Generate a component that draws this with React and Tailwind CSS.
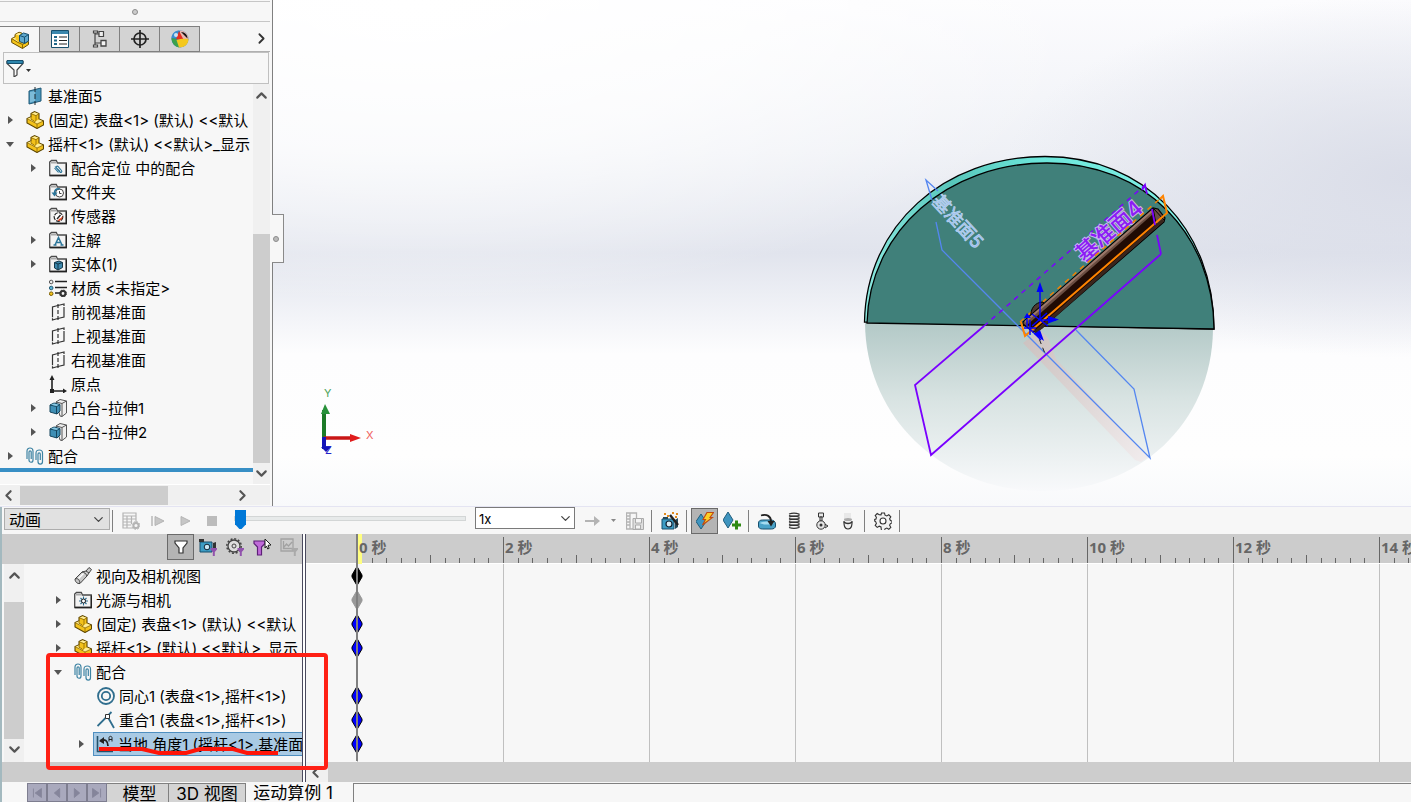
import React, { useState } from 'react';
import { FiChevronDown, FiChevronLeft, FiChevronRight, FiChevronUp } from 'react-icons/fi';

const Svg = ({ size = 18, box = 18, children }) => (
  <svg width={size} height={size} viewBox={`0 0 ${box} ${box}`} fill="none" className="shrink-0">
    {children}
  </svg>
);

/* ---------- tree icons ---------- */

const PartIcon = () => (
  <Svg>
    <path d="M5 2.500 8.500.7l4.500 1.800V8l4.500 2v4l-6.500 3.500L1 12V7.500l4-1.800z" fill="#f3c21b" stroke="#5d4600" strokeWidth="1.100" />
    <path d="M5.500 2.700 8.500 1.200l4 1.500-2.500 1.600zM1.500 7.700 5 6.200v2.300l3 1.500-1.500 1zM10.500 9.500l2.500-1 4 1.700-6 3-3-1.700z" fill="#ffec94" />
    <path d="M5 2.700l5 2v4.800L8 11.300 1.500 7.800M10 4.700l2.700-1.900M8 11.300l3 1.700v4M11 13l6-2.800M5 6v2.300l3 1.500" stroke="#8a6700" strokeWidth=".8" />
  </Svg>
);

const AssemblyIcon = () => (
  <Svg>
    <path d="M4 3.500 8 1.200l3 1v6l6.500 2.300v3L11.500 17.500.700 11.500v-4L4 6z" fill="#f6c61c" stroke="#6b4f00" />
    <path d="M4.500 3.500 8 1.800l2.500 1L8 4.500zM1.500 7.500 4.500 6.500v2l3 2-1 .8z" fill="#ffec94" />
    <path d="M1 7.800l6 3.700 4.500 2v4M11.500 13.500l5.500-3" stroke="#8a6700" />
    <path d="M8.500 4.500l4-2.500 5 1.500V10l-4 2.500-5-2z" fill="#5fa9cd" stroke="#174f6d" />
    <path d="M8.500 4.500 13.500 6.200l4-2.700M13.500 6.200v6" stroke="#174f6d" />
  </Svg>
);

const PlaneSolidIcon = () => (
  <Svg>
    <path d="M3 4l12-3v13L3 17z" fill="#4b97bd" stroke="#1f5876" />
    <path d="M4 5l5-1v10l-5 1.500z" fill="#7cbbd8" />
    <path d="M9 0v18" stroke="#1c2a33" strokeDasharray="5 2" />
  </Svg>
);

const PlaneIcon = () => (
  <Svg>
    <path d="M7 3 3.500 4v13L7 16M11 15l4-1V1l-4 1M7 3l4-1M7 16l4-1" stroke="#333" strokeWidth="1.200" strokeDasharray="14 1" />
    <path d="M9 1v17" stroke="#333" strokeWidth="1.200" strokeDasharray="4 2" />
  </Svg>
);

const Folder = ({ children }) => (
  <Svg>
    <path d="M.7 16.500V3L2.500 1.500h4.800L8.500 4h8.800v12.500z" fill="#f3f3f3" stroke="#4b4b4b" strokeWidth="1.300" />
    <path d="M2 3h5l1 1.500H2z" fill="#a9a9a9" />
    <path d="M17.300 4.500v12H1" stroke="#222" strokeWidth="1.300" />
    {children}
  </Svg>
);

const MateFolderIcon = () => (
  <Folder>
    <path d="M6 7.500l5 5.500c1 1 2.500-.4 1.500-1.500L9 7.500C8 6.500 6.500 7.500 7.500 9l3.500 3.500M5.500 9l4 4.500" stroke="#2b7599" strokeWidth="1.100" />
  </Folder>
);
const HistoryFolderIcon = () => (
  <Folder>
    <circle cx="10.500" cy="10" r="4" stroke="#444" fill="#fff" />
    <path d="M10.500 8v2.500h2" stroke="#444" />
    <path d="M11 6C7 5 5 7.500 5.500 11" stroke="#2b7599" strokeWidth="1.600" />
    <path d="M2.500 9.500h6l-3 4z" fill="#2b7599" />
  </Folder>
);
const SensorFolderIcon = () => (
  <Folder>
    <circle cx="9.500" cy="10" r="4.300" stroke="#222" strokeWidth="1.200" strokeDasharray="4 1" fill="#fff" />
    <path d="M13.500 9a4.300 4.300 0 0 1-5 5l1.500-2 2-1z" fill="#e3421d" />
    <path d="M8 12l3.500-4" stroke="#222" strokeWidth="1.300" />
  </Folder>
);
const NoteFolderIcon = () => (
  <Folder>
    <path d="M6 14 9.500 6.500 13 14M7.500 11.500h4M4.500 14h3M11.500 14h3" stroke="#2b7599" strokeWidth="1.500" />
  </Folder>
);
const BodyFolderIcon = () => (
  <Folder>
    <path d="M5.500 7.500 10 6l3.500 1.500v5L9 15l-3.500-2z" fill="#3c88ad" stroke="#15384a" />
    <path d="M5.500 7.500 9 9l4.500-1.500M9 9v6" stroke="#15384a" />
  </Folder>
);
const LightFolderIcon = () => (
  <Folder>
    <path d="M9.500 5.500v9M5 10h9M6.500 7l6 6M12.500 7l-6 6" stroke="#2b6f92" strokeWidth="1.100" />
    <circle cx="9.500" cy="10" r="2" fill="#fff" stroke="#222" />
  </Folder>
);

const MaterialIcon = () => (
  <Svg>
    <path d="M6 2.500h12M6 8.500h12M6 14h5" stroke="#222" strokeWidth="1.600" />
    <circle cx="2.200" cy="3" r="1.800" fill="#eee" stroke="#555" />
    <circle cx="2.200" cy="9" r="1.800" fill="#58b3d8" stroke="#245c75" />
    <circle cx="2.200" cy="14.700" r="1.800" fill="#f5c41a" stroke="#7a5d00" />
    <circle cx="14" cy="14.500" r="2.400" stroke="#333" strokeWidth="2" />
    <circle cx="14" cy="14.500" r="3.500" stroke="#333" strokeDasharray="1.500 1.250" />
  </Svg>
);

const OriginIcon = () => (
  <Svg>
    <path d="M3 3v13h12" stroke="#222" strokeWidth="1.600" />
    <path d="M.5 5 3 0l2.500 5zM14 13.500l4 2.500-4 2.500zM1 14h4v4H1z" fill="#222" />
  </Svg>
);

const ExtrudeIcon = () => (
  <Svg>
    <path d="M7 3l4-2.500L17.500 2v12L13 17.500l-2-.5z" fill="#efefef" stroke="#555" />
    <path d="M13 4.500v13M7 3l6 1.500L17.500 2" stroke="#555" />
    <path d="M1 6l4-2 6 1.500V12l-3 3-7-2z" fill="#3f8fb5" stroke="#15455d" />
    <path d="M1 6l6.500 1.500V15M7.500 7.500 11 5.500" stroke="#15455d" />
    <path d="M2 5.800 5 4.600l4.800 1.200-2.300 1.200z" fill="#8ac8e2" />
  </Svg>
);

const MatesIcon = () => (
  <Svg>
    <path d="M1 12V4c0-4 6-4 6 0v9c0 3-4 3-4 0V5c0-1.500 2.200-1.500 2.200 0v7" stroke="#3d83a3" strokeWidth="1.200" />
    <path d="M10 13V6c0-4 6.500-4 6.500 0v8.500c0 3.500-4.500 3.500-4.500 0V7c0-1.500 2.300-1.500 2.300 0v6" stroke="#3d83a3" strokeWidth="1.200" />
  </Svg>
);

const ConcentricIcon = () => (
  <Svg>
    <circle cx="9" cy="9" r="8" stroke="#2f6e8e" strokeWidth="1.800" />
    <circle cx="9" cy="9" r="4.200" stroke="#2f6e8e" strokeWidth="1.800" />
  </Svg>
);
const CoincidentIcon = () => (
  <Svg>
    <path d="M.5 15 14.500 1M10.500 5.500 17 17" stroke="#2f6e8e" strokeWidth="1.800" />
    <path d="M8.500 3.500h4v4h-4z" fill="#fff" stroke="#333" />
  </Svg>
);
const AngleIcon = () => (
  <Svg>
    <path d="M1.500 1v15.500H17" stroke="#24516a" strokeWidth="1.600" />
    <path d="M4.500 5.500C9 3.500 12 6 12 11" stroke="#222" strokeWidth="1.800" />
    <path d="M3 6l5-4v7z" fill="#222" />
    <path d="M13 6.500V2.800c0-2 3-2 3 0v3.700M13 4.500h3" stroke="#222" />
  </Svg>
);
const CameraViewIcon = () => (
  <Svg>
    <path d="M1 12l7-7 4-1 3-3.500 2.500 2L15 6l-2 3-7 7.500c-3 .5-5-2-5-4.500z" fill="#c9c9c9" stroke="#444" />
    <path d="M1.500 12c2-1 4 .5 4.500 4M8 5c2 0 4 1.500 5 4M12 4l3 2" stroke="#444" />
    <path d="M4 11l5-5 1 1-5 5z" fill="#fff" />
  </Svg>
);

/* ---------- property manager tabs ---------- */

const ListTabIcon = () => (
  <Svg>
    <path d="M.5.500h17v17H.5z" fill="#fff" stroke="#174f6d" />
    <path d="M1 1h16v3H1z" fill="#3b88ae" />
    <path d="M3 7h3M3 10.500h3M3 14h3" stroke="#1f6789" strokeWidth="2" />
    <path d="M8 7h8M8 10.500h8M8 14h8" stroke="#222" />
  </Svg>
);
const ConfigTabIcon = () => (
  <Svg>
    <path d="M4 1v16M4 4h4M4 13h6" stroke="#444" strokeWidth="1.200" />
    <path d="M2.500 1h4v2h-4zM2.500 15h4v2h-4zM8 1.500h4.500v5H8z" fill="#eee" stroke="#444" strokeWidth="1.200" />
    <path d="M10 10.500h5v5.500h-5z" fill="#f4f4f4" stroke="#444" strokeWidth="1.300" />
  </Svg>
);
const TargetTabIcon = () => (
  <Svg>
    <circle cx="9" cy="9" r="6" stroke="#222" strokeWidth="1.700" />
    <path d="M9 0v18M0 9h18" stroke="#222" strokeWidth="1.700" />
  </Svg>
);
const AppearanceTabIcon = () => (
  <Svg>
    <circle cx="9" cy="9" r="8.500" fill="#2d7ec4" />
    <path d="M9 9V.5A8.500 8.500 0 0 1 17.500 9z" fill="#e8b6ae" />
    <path d="M.5 8C.5 4 4 .500 8 .5L6 8z" fill="#3a8fd0" />
    <path d="M5 9.500 8 1l4.500 8.500z" fill="#e52f1f" />
    <path d="M.5 8l5 1L8 17.400C4 17 .5 13 .5 8z" fill="#3ca24c" />
    <path d="M5.500 10c4-1.500 8-1.500 12-1 0 5-4 8.500-9.500 8.500z" fill="#f4c81d" />
    <path d="M10 2c4 0 6.500 3 6.500 6.500z" fill="#111" />
    <circle cx="5" cy="5" r="2" fill="#fff" opacity=".75" />
  </Svg>
);
const FilterIcon = () => (
  <Svg>
    <path d="M1 2.500h16v2L11 11v5l-3 2v-7L1 4.500z" fill="#fafafa" stroke="#444" strokeWidth="1.200" />
    <path d="M1 1.500h16v3H1z" fill="#2d86ad" stroke="#174f6d" />
  </Svg>
);

/* ---------- motion toolbar icons ---------- */

const CalcIcon = () => (
  <Svg>
    <path d="M1 1h13v15H1zM1 4h13M1 7h13M1 10h9M1 13h8M5 4v12M9.500 4v8" stroke="#b4b4b4" strokeWidth="1.200" />
    <circle cx="14" cy="13.500" r="2.600" fill="#f7f7f7" stroke="#b4b4b4" strokeWidth="2" />
    <circle cx="14" cy="13.500" r="3.900" stroke="#b4b4b4" strokeDasharray="1.600 1.460" />
  </Svg>
);
const PlayStartIcon = () => (
  <Svg>
    <path d="M3 4v10" stroke="#b9b9b9" strokeWidth="1.500" />
    <path d="M6 4.500l9 4.500-9 4.500z" fill="#c6c6c6" stroke="#b4b4b4" />
  </Svg>
);
const PlayIcon = () => (
  <Svg><path d="M5 4.500l9 4.500-9 4.500z" fill="#c6c6c6" stroke="#b4b4b4" /></Svg>
);
const StopIcon = () => (
  <Svg><path d="M4 4h10v10H4z" fill="#bcbcbc" /></Svg>
);
const ArrowIcon = () => (
  <Svg><path d="M1 8h9V4l6 5-6 5v-4H1z" fill="#b4b4b4" /></Svg>
);
const SaveFilmIcon = () => (
  <Svg>
    <path d="M.5 1h10v16H.5zM4 1v16M.5 4H4M.5 7H4M.5 10H4M.5 13H4" stroke="#b4b4b4" strokeWidth="1.300" />
    <path d="M7 6.500h10.500v11H7z" fill="#dedede" stroke="#aaa" />
    <path d="M9.500 6.500h6V11h-6zM9.500 13h5v4h-5z" fill="#f4f4f4" stroke="#aaa" />
  </Svg>
);
const WizardIcon = () => (
  <Svg>
    <path d="M1 7h12v10H1z" fill="#3c9cc4" stroke="#174f6d" />
    <path d="M2 5h5v2H2zM14 8l3-2v9l-3 2z" fill="#244a5c" />
    <circle cx="8" cy="12" r="3" fill="#d5edf7" stroke="#123" strokeWidth="1.200" />
    <path d="M9 3l8 10" stroke="#222" strokeWidth="2.400" />
    <path d="M3 2h2M6 4h2M11 1h2M15 2h2M14 5h2" stroke="#e08a1e" strokeWidth="2" />
  </Svg>
);
const AutoKeyIcon = () => (
  <Svg>
    <path d="M5 2l5 7.500L5 17 0 9.500z" fill="#3f95bf" stroke="#205e7d" />
    <path d="M11 .5h6.500L14 5.500h2.500L6.500 13 9.500 7.500H7z" fill="#fbcf24" stroke="#c04a11" strokeWidth="1.100" />
  </Svg>
);
const AddKeyIcon = () => (
  <Svg>
    <path d="M5 0l5 8-5 8-5-8z" fill="#3f95bf" stroke="#205e7d" />
    <path d="M13.500 8.500v9M9 13h9" stroke="#2f8a12" strokeWidth="3" />
  </Svg>
);
const MotorIcon = () => (
  <Svg>
    <path d="M.5 11c0-2 1.500-3 4-3h8c3 0 5 1.500 5 4v2c0 2-2 3-4 3h-9c-2.500 0-4-1-4-3z" fill="#4aa3c9" stroke="#174f6d" />
    <path d="M2 11c2-2 12-2 14 0-2 2-12 2-14 0z" fill="#a5dcf0" />
    <path d="M3 3.500c6-2 10 1 10 6" stroke="#222" strokeWidth="1.800" />
    <path d="M9.500 9h7L13 14.500z" fill="#222" />
  </Svg>
);
const SpringIcon = () => (
  <Svg>
    {[2, 5, 8, 11, 14].map((y) => (
      <path key={y} d={`M4 ${y}c3-1 7-1 10 0v1.500c-3 1-7 1-10 0`} stroke="#333" strokeWidth="1.100" />
    ))}
  </Svg>
);
const ContactIcon = () => (
  <Svg>
    <path d="M6.500 1h5v4h-5z" fill="#e8e8e8" stroke="#333" />
    <path d="M8 5h2v4H8zM11 11l5 3-3 2" fill="#ddd" stroke="#333" />
    <circle cx="9" cy="13" r="4.200" fill="#e4e4e4" stroke="#333" />
    <circle cx="9" cy="13" r="1.500" fill="#333" />
  </Svg>
);
const GravityIcon = () => (
  <Svg>
    <path d="M5 1h7v8H5z" fill="#ddd" opacity=".6" />
    <path d="M5 9c0 2-.5 8 4 8s4-6 4-8" fill="#eee" stroke="#333" strokeWidth="1.200" />
    <path d="M5 10c2 2 6 2 8 0" stroke="#333" strokeWidth="1.500" />
    <ellipse cx="9" cy="7.500" rx="4" ry="1.500" fill="#aaa" />
  </Svg>
);
const GearIcon = () => (
  <Svg>
    <path d="M7.500 1h3l.5 2.200 1.800.8 2-1.200 2 2-1.200 2 .8 1.700 1.600.5v2l-1.600.6-.8 1.700 1.200 2-2 2-2-1.200-1.800.7-.5 2.200h-3L7 15l-1.800-.8-2 1.200-2-2 1.200-2-.8-1.800-.9-.5V7.500L2 7l.4-1.700-1.200-1.800 2-2 2 1.200L7 2.900z" fill="#f2f2f2" stroke="#333" strokeWidth="1.100" />
    <circle cx="9" cy="9" r="3" fill="#fff" stroke="#333" strokeWidth="1.100" />
  </Svg>
);

const SmallFunnel = ({ color = '#9153ad' }) => (
  <path d="M11.500 10h6.500v1.500l-2.200 2.500v4h-2v-4l-2.300-2.500z" fill={color} />
);
const FunnelIcon = () => (
  <Svg>
    <path d="M3 3h12v2l-4 5v5H7v-5L3 5z" fill="#fff" stroke="#333" strokeWidth="1.200" />
  </Svg>
);
const FilterAnimIcon = () => (
  <Svg>
    <path d="M1 4h12v10H1z" fill="#3c9cc4" stroke="#174f6d" />
    <path d="M0 1h5v3H0zM14 5l3-1v6l-3 1z" fill="#333" />
    <circle cx="8" cy="9" r="2.800" fill="#c7e7f4" stroke="#123" />
    <SmallFunnel />
  </Svg>
);
const FilterDriveIcon = () => (
  <Svg>
    <circle cx="8" cy="8" r="6" fill="#ddd" stroke="#444" strokeWidth="1.300" />
    <circle cx="8" cy="8" r="7.200" stroke="#444" strokeWidth="1.500" strokeDasharray="2 1.770" />
    <circle cx="8" cy="8" r="2" stroke="#444" />
    <SmallFunnel />
  </Svg>
);
const FilterSelectIcon = () => (
  <Svg>
    <path d="M1 3h11v2.500L8.500 9v8h-4V9L1 5.500z" fill="#c06bd9" stroke="#5d1f78" strokeWidth="1.200" />
    <path d="M12 1l6 6-3 .3 1.200 3-1.500.7-1.200-3-1.500 2z" fill="#fff" stroke="#222" />
  </Svg>
);
const FilterResultIcon = () => (
  <Svg>
    <path d="M1 1h12v12H1zM3.500 3v7.500H12M4 9l2.500-3 2 2L12 4" stroke="#a2a2a2" strokeWidth="1.300" />
    <SmallFunnel color="#aaa" />
  </Svg>
);

/* ---------- data ---------- */

const featureTree = [
  { label: '基准面5', icon: PlaneSolidIcon, level: 0 },
  { label: '(固定) 表盘<1> (默认) <<默认', icon: PartIcon, level: 0, arrow: 'closed' },
  { label: '摇杆<1> (默认) <<默认>_显示', icon: PartIcon, level: 0, arrow: 'open' },
  { label: '配合定位 中的配合', icon: MateFolderIcon, level: 1, arrow: 'closed' },
  { label: '文件夹', icon: HistoryFolderIcon, level: 1 },
  { label: '传感器', icon: SensorFolderIcon, level: 1 },
  { label: '注解', icon: NoteFolderIcon, level: 1, arrow: 'closed' },
  { label: '实体(1)', icon: BodyFolderIcon, level: 1, arrow: 'closed' },
  { label: '材质 <未指定>', icon: MaterialIcon, level: 1 },
  { label: '前视基准面', icon: PlaneIcon, level: 1 },
  { label: '上视基准面', icon: PlaneIcon, level: 1 },
  { label: '右视基准面', icon: PlaneIcon, level: 1 },
  { label: '原点', icon: OriginIcon, level: 1 },
  { label: '凸台-拉伸1', icon: ExtrudeIcon, level: 1, arrow: 'closed' },
  { label: '凸台-拉伸2', icon: ExtrudeIcon, level: 1, arrow: 'closed' },
  { label: '配合', icon: MatesIcon, level: 0, arrow: 'closed' },
];

const motionTree = [
  { label: '视向及相机视图', icon: CameraViewIcon, level: 0, keyColor: '#000' },
  { label: '光源与相机', icon: LightFolderIcon, level: 0, arrow: 'closed', keyColor: '#999' },
  { label: '(固定) 表盘<1> (默认) <<默认', icon: PartIcon, level: 0, arrow: 'closed', keyColor: '#00f' },
  { label: '摇杆<1> (默认) <<默认>_显示', icon: PartIcon, level: 0, arrow: 'closed', keyColor: '#00f' },
  { label: '配合', icon: MatesIcon, level: 0, arrow: 'open' },
  { label: '同心1 (表盘<1>,摇杆<1>)', icon: ConcentricIcon, level: 1, keyColor: '#00f' },
  { label: '重合1 (表盘<1>,摇杆<1>)', icon: CoincidentIcon, level: 1, keyColor: '#00f' },
  { label: '当地 角度1 (摇杆<1>,基准面', icon: AngleIcon, level: 1, arrow: 'closed', selected: true, keyColor: '#00f' },
];

const managerTabs = [AssemblyIcon, ListTabIcon, ConfigTabIcon, TargetTabIcon, AppearanceTabIcon];
const seconds = [0, 2, 4, 6, 8, 10, 12, 14];

/* ---------- small parts ---------- */

const TreeRow = ({ item }) => {
  const Icon = item.icon;
  return (
    <li className={`flex h-6 items-center ${item.level ? 'pl-[23px]' : ''}`}>
      <button aria-label={item.label} className="flex h-6 w-5 shrink-0 items-center justify-center">
        {item.arrow === 'closed' && (
          <svg width="5" height="8" viewBox="0 0 5 8"><path d="M0 0l5 4-5 4z" fill="#555" /></svg>
        )}
        {item.arrow === 'open' && (
          <svg width="8" height="5" viewBox="0 0 8 5"><path d="M0 0h8L4 5z" fill="#555" /></svg>
        )}
      </button>
      <div className={`flex items-center gap-1 border leading-[18px] whitespace-nowrap ${item.selected ? 'ml-[2px] h-6 flex-1 border-r-0 border-[#4f8fc0] bg-[#a9cae4] pl-[2px]' : 'shrink-0 border-transparent pl-[5px]'}`}>
        <Icon />
        <span className="pt-[2px]">{item.label}</span>
      </div>
    </li>
  );
};

const Separator = () => <span className="mr-1 ml-[3px] h-[22px] w-px shrink-0 bg-[#808080]" />;

const ToolButton = ({ icon: Icon, label, active }) => (
  <button
    aria-label={label}
    className={`flex h-[26px] w-[27px] shrink-0 items-center justify-center ${active ? 'border border-[#6a6a6a] bg-[#b4b4b4]' : ''}`}
  >
    <Icon />
  </button>
);

const KeyPoint = ({ color }) => (
  <svg width="12" height="20" viewBox="0 0 12 20">
    <path d="M6 .5l5 8.500v2L6 19.500 1 11V9z" fill={color} stroke={color === '#00f' ? '#000' : color} />
  </svg>
);

/* ---------- 3D view ---------- */

const Scene = () => (
  <svg viewBox="273 0 1138 506" preserveAspectRatio="xMidYMid slice" className="absolute inset-0 h-full w-full">
    <defs>
      <linearGradient id="sky" x1="0" y1="0" x2="0" y2="1">
        <stop offset="0" stopColor="#fcfcfe" />
        <stop offset=".3" stopColor="#eff1f6" />
        <stop offset=".5" stopColor="#e1e4ed" />
        <stop offset=".58" stopColor="#eceef4" />
        <stop offset=".7" stopColor="#fdfdfe" />
        <stop offset=".9" stopColor="#fefefe" />
        <stop offset="1" stopColor="#f8f9fb" />
      </linearGradient>
      <radialGradient id="glow" cx=".12" cy="0" r=".6">
        <stop offset="0" stopColor="#fff" />
        <stop offset=".5" stopColor="#fff" stopOpacity=".7" />
        <stop offset="1" stopColor="#fff" stopOpacity="0" />
      </radialGradient>
      <radialGradient id="shade" cx="1" cy=".35" r=".36">
        <stop offset="0" stopColor="#dadde8" />
        <stop offset="1" stopColor="#dadde8" stopOpacity="0" />
      </radialGradient>
      <linearGradient id="mirror" x1="0" y1="0" x2="0" y2="1">
        <stop offset="0" stopColor="#b3c9c7" />
        <stop offset=".45" stopColor="#d8e3e2" />
        <stop offset="1" stopColor="#f8f9fb" />
      </linearGradient>
      <linearGradient id="rodMirror" x1="0" y1="0" x2="1" y2="1">
        <stop offset="0" stopColor="#cbc1bf" />
        <stop offset="1" stopColor="#f1eced" />
      </linearGradient>
      <linearGradient id="rim" x1="0" y1="0" x2="1" y2="0">
        <stop offset="0" stopColor="#8be9e0" />
        <stop offset=".25" stopColor="#58c6ba" />
        <stop offset=".5" stopColor="#6ce6da" />
        <stop offset="1" stopColor="#86f3e9" />
      </linearGradient>
    </defs>
    <rect x="273" width="1138" height="506" fill="url(#sky)" />
    <rect x="273" width="1138" height="506" fill="url(#shade)" />
    <rect x="273" width="1138" height="506" fill="url(#glow)" />

    {/* dial and its floor reflection */}
    <path d="M865 323C866 420 945 491 1042 491S1212 424 1213 329z" fill="url(#mirror)" />
    <path d="M1023 343l17-13 8 8 8 21 92 98-7 5-6-2z" fill="url(#rodMirror)" />
    <path d="M864.500 322C866 225 945 156.500 1045 156.500S1214 230 1214 329z" fill="url(#rim)" stroke="#000" strokeWidth="1.300" />
    <path d="M867 323C869 231 948 163 1047 163S1213.500 235 1214 329z" fill="#40807a" stroke="#000" strokeWidth="1.300" />

    {/* plane 5 */}
    <path d="M932 200l-6-20 12 11M936 222l6 28 208 208-16-69-58-59" stroke="#5486f0" strokeWidth="1.300" fill="none" />
    <text x="931" y="202" transform="rotate(47 931 202)" fontSize="18" fill="#8fb2f2" stroke="#b9d3ee" strokeWidth=".8">基准面5</text>

    {/* plane 4 */}
    <path d="M984 326l161-141" stroke="#7a00ff" strokeWidth="1.500" strokeDasharray="5 5" />
    <path d="M1161 254l-230 201-16-70 69-59M1142 190l3-5 2 9" stroke="#7a00ff" strokeWidth="1.800" fill="none" />
    <text x="1084" y="263" transform="rotate(-41 1084 263)" fontSize="22" fontWeight="500" fill="#8c1cf5" stroke="#c9b8ea" strokeWidth="2" paintOrder="stroke">基准面4</text>

    {/* rocker */}
    <path d="M1020 322l143-126" stroke="#f58200" strokeWidth="1.500" strokeDasharray="5 5" />
    <path d="M1031 317c-1-8 4-15 12-15l5 7-11 12z" fill="#4f3a31" stroke="#000" />
    <path d="M1023 322l130-114 5 1 7 9-1 4-122 106-9 4-10-8z" fill="#6b4e42" stroke="#000" strokeWidth="1.200" />
    <path d="M1027 325l126-111 4 10-121 106z" fill="#210b04" />
    <path d="M1025 322l127-111" stroke="#9d786a" strokeWidth="2" />
    <path d="M1035 333l128-113" stroke="#3a251c" strokeWidth="3" />
    <path d="M1154 209l10 11M1153 208l3 16" stroke="#000" />
    <path d="M1160 199l3-3 4 17-142 123-4-14" stroke="#ff8400" strokeWidth="2" fill="none" />
    <path d="M1152 209l3 16M1157 235l4 19" stroke="#7a00ff" strokeWidth="1.800" />
    <path d="M1036 331l10 25" stroke="#222" strokeDasharray="5 4" />

    {/* origin marker */}
    <path d="M1040 320v-32M1038 320h18M1029 328l12 12M1024 328h12M1030 320v15M1032 314l16 12M1032 326l15-13M1027 319v8" stroke="#00f" strokeWidth="1.400" />
    <path d="M1040 282l3.500 10h-7zM1048 316l11 3.500-11 4zM1034 334l10 7-4-11zM1024 318h7l-4-5z" fill="#00f" />

    {/* triad */}
    <path d="M324 438v-28" stroke="#1d7a28" strokeWidth="4" />
    <path d="M325 404l5 10h-9z" fill="#28913a" />
    <path d="M324 438h30" stroke="#c91616" strokeWidth="3.500" />
    <path d="M350 434l11 4-11 4z" fill="#e01c1c" />
    <path d="M324 437v12" stroke="#1414b8" strokeWidth="4" />
    <path d="M321 447h10l-5 5z" fill="#1414b8" />
    <g fontSize="11">
      <text x="324" y="397" fill="#4ea35b">Y</text>
      <text x="366" y="439" fill="#f06060">X</text>
      <text x="325" y="454" fill="#2323c9">Z</text>
    </g>
  </svg>
);

/* ---------- panels ---------- */

const FeaturePanel = () => (
  <aside className="flex w-[273px] shrink-0 flex-col border-r border-[#808080] bg-[#f7f7f7]">
    <div className="mt-px mr-[2px] flex h-[21px] items-center justify-center border-y border-[#c6c6c6]">
      <span className="h-[6px] w-[6px] rounded-full border border-[#8c8c8c] bg-[#ccc]" />
    </div>
    <div className="mt-1 mr-[2px] flex h-[26px] items-stretch">
      {managerTabs.map((Icon, i) => (
        <button
          key={i}
          aria-label={`tab ${i + 1}`}
          className={`flex w-10 items-center justify-center border-t border-r border-[#808080] ${i === 0 ? '' : 'border-b bg-[#d3d3d3]'}`}
        >
          <Icon />
        </button>
      ))}
      <button aria-label="more" className="flex flex-1 items-center justify-end border-b border-[#b0b0b0] text-[#333]">
        <FiChevronRight size={17} strokeWidth={2.5} />
      </button>
    </div>
    <label className="mr-[3px] ml-[3px] flex h-8 shrink-0 items-center gap-[2px] border border-[#c0c0c0] pl-[2px]">
      <FilterIcon />
      <svg width="5" height="3" viewBox="0 0 5 3" className="mt-1"><path d="M0 0h5L2.500 3z" fill="#333" /></svg>
      <input aria-label="filter" className="min-w-0 flex-1 bg-transparent outline-none" />
    </label>

    <div className="flex min-h-0 flex-1">
      <div className="min-w-0 flex-1 overflow-hidden">
        <ul>
          {featureTree.map((item) => <TreeRow key={item.label} item={item} />)}
        </ul>
        <div className="h-1 bg-[#388fc5]" />
      </div>
      <div className="flex w-[17px] shrink-0 flex-col items-center bg-[#f0f0f0] text-[#555]">
        <FiChevronUp size={17} strokeWidth={3} className="mt-[3px] shrink-0" />
        <div className="mt-[130px] w-full flex-1 bg-[#cdcdcd]" />
        <FiChevronDown size={17} strokeWidth={3} className="my-[2px] shrink-0" />
      </div>
      <div className="w-[2px]" />
    </div>
    <div className="mr-[2px] mb-px flex h-[21px] shrink-0 items-center border-t border-white bg-[#f0f0f0] pr-[17px] text-[#555]">
      <FiChevronLeft size={17} strokeWidth={3} />
      <div className="ml-[3px] h-[19px] w-[148px] bg-[#cdcdcd]" />
      <FiChevronRight size={17} strokeWidth={3} className="ml-auto mr-[2px]" />
    </div>
  </aside>
);

const MotionToolbar = () => {
  const [time, setTime] = useState(0);
  return (
    <div className="flex h-[27px] items-center pl-[2px]">
      <label className="relative w-[106px] shrink-0">
        <select aria-label="study type" className="h-[22px] w-full appearance-none border border-[#adadad] bg-[#e1e1e1] pt-[2px] pl-1 text-base leading-[18px]">
          <option>动画</option>
        </select>
        <FiChevronDown size={15} className="pointer-events-none absolute top-1 right-1 text-[#444]" />
      </label>
      <span className="mr-1 ml-[2px] h-[22px] w-px bg-[#808080]" />
      <ToolButton icon={CalcIcon} label="calculate" />
      <ToolButton icon={PlayStartIcon} label="play from start" />
      <ToolButton icon={PlayIcon} label="play" />
      <ToolButton icon={StopIcon} label="stop" />
      <input
        type="range"
        aria-label="time"
        value={time}
        onChange={(e) => setTime(e.target.value)}
        className="mx-[9px] mb-1 h-5 w-[232px] shrink-0 appearance-none bg-transparent [&::-webkit-slider-runnable-track]:h-[5px] [&::-webkit-slider-runnable-track]:border [&::-webkit-slider-runnable-track]:border-[#d3d6d6] [&::-webkit-slider-runnable-track]:bg-[#e7eaea] [&::-webkit-slider-thumb]:-mt-[7px] [&::-webkit-slider-thumb]:h-[19px] [&::-webkit-slider-thumb]:w-[11px] [&::-webkit-slider-thumb]:appearance-none [&::-webkit-slider-thumb]:bg-[#0078d7] [&::-webkit-slider-thumb]:[clip-path:polygon(0_0,100%_0,100%_75%,60%_100%,40%_100%,0_75%)]"
      />
      <label className="relative mb-1 w-[100px] shrink-0">
        <select aria-label="speed" className="h-[22px] w-full appearance-none border border-[#7a7a7a] bg-white pt-[2px] pl-[3px] text-[13px] leading-[18px]">
          <option>1x</option>
        </select>
        <FiChevronDown size={15} className="pointer-events-none absolute top-1 right-[2px] text-[#444]" />
      </label>
      <span className="w-1 shrink-0" />
      <ToolButton icon={ArrowIcon} label="playback mode" />
      <button aria-label="playback menu" className="flex w-[15px] shrink-0 justify-center">
        <svg width="5" height="3" viewBox="0 0 5 3"><path d="M0 0h5L2.500 3z" fill="#888" /></svg>
      </button>
      <ToolButton icon={SaveFilmIcon} label="save animation" />
      <Separator />
      <ToolButton icon={WizardIcon} label="animation wizard" />
      <Separator />
      <ToolButton icon={AutoKeyIcon} label="auto key" active />
      <ToolButton icon={AddKeyIcon} label="add key" />
      <Separator />
      <ToolButton icon={MotorIcon} label="motor" />
      <ToolButton icon={SpringIcon} label="spring" />
      <ToolButton icon={ContactIcon} label="contact" />
      <ToolButton icon={GravityIcon} label="gravity" />
      <Separator />
      <ToolButton icon={GearIcon} label="properties" />
      <Separator />
    </div>
  );
};

const MotionTree = () => (
  <div className="flex w-[300px] shrink-0 flex-col">
    <div className="flex h-[30px] items-start justify-end bg-[#ccc]">
      <ToolButton icon={FunnelIcon} label="no filter" active />
      <ToolButton icon={FilterAnimIcon} label="filter animated" />
      <ToolButton icon={FilterDriveIcon} label="filter driving" />
      <ToolButton icon={FilterSelectIcon} label="filter selected" />
      <ToolButton icon={FilterResultIcon} label="filter results" />
    </div>
    <div className="flex h-[198px]">
      <div className="ml-[2px] flex w-5 shrink-0 flex-col items-center bg-[#f0f0f0] text-[#555]">
        <FiChevronUp size={17} strokeWidth={3} className="mt-[3px] shrink-0" />
        <div className="mt-[18px] w-full flex-1 bg-[#cdcdcd]" />
        <FiChevronDown size={17} strokeWidth={3} className="mt-[2px] mb-1 shrink-0" />
      </div>
      <ul className="min-w-0 flex-1 overflow-hidden pl-6">
        {motionTree.map((item) => <TreeRow key={item.label} item={item} />)}
      </ul>
    </div>
    <div className="h-5 bg-[#ccc]" />
  </div>
);

const Timeline = () => (
  <div className="relative min-w-0 flex-1 overflow-hidden">
    <div className="flex h-[30px] border-b border-white bg-[#ccc] pl-[51px]">
      {seconds.map((s) => (
        <div key={s} className="relative flex h-[29px] w-[146px] shrink-0 items-end pt-[3px]">
          <span className="absolute top-[3px] left-[2px] z-10 font-['Open_Sans','Noto_Sans_CJK_SC',sans-serif] text-[15px] leading-5 font-bold whitespace-nowrap text-[#666]">{s} 秒</span>
          {[0, 1, 2, 3, 4, 5, 6, 7, 8, 9].map((t) => (
            <span key={t} className={`flex-1 border-l border-[#666] ${t === 0 ? 'h-full' : t === 5 ? 'h-2' : 'h-[5px]'}`} />
          ))}
        </div>
      ))}
    </div>
    <div className="flex h-[198px] pl-[51px]">
      {seconds.map((s) => (
        <div key={s} className="w-[146px] shrink-0 border-l border-[#c0c0c0]" />
      ))}
    </div>
    <div className="flex h-5 items-center bg-[#cdcdcd] text-[#555]">
      <div className="flex h-full w-[22px] items-center bg-[#f0f0f0] pl-px">
        <FiChevronLeft size={17} strokeWidth={3} />
      </div>
    </div>

    {/* key points and the current time bar lie over the grid */}
    <div className="absolute top-[30px] left-[45px]">
      {motionTree.map((item) => (
        <div key={item.label} className="flex h-6 items-center">
          {item.keyColor && <KeyPoint color={item.keyColor} />}
        </div>
      ))}
    </div>
    <div className="absolute top-0 left-[50px] h-[227px] w-[2px] bg-[#808080]" />
    <div className="absolute top-0 left-[52px] h-[30px] w-1 bg-[#ffff80]" />
  </div>
);

const StudyTabs = () => {
  const navPaths = ['M5 4v10M14 4l-7 5 7 5z', 'M12 4l-6 5 6 5z', 'M6 4l6 5-6 5z', 'M13 4v10M4 4l7 5-7 5z'];
  return (
    <div className="flex h-[19px] items-stretch pl-[25px] text-[17px] leading-5">
      {navPaths.map((d) => (
        <button key={d} aria-label="scroll tabs" className="flex w-5 items-center justify-center border border-[#7e7e90] bg-[#a9a9bd]">
          <Svg size={16}><path d={d} fill="#85859b" stroke="#85859b" /></Svg>
        </button>
      ))}
      <button className="w-[62px] border-t border-r border-[#808080] bg-[#d4d4d4] pl-1">模型</button>
      <button className="w-[77px] border-t border-r border-[#808080] bg-[#d4d4d4] whitespace-nowrap">3D 视图</button>
      <button className="w-[94px] whitespace-nowrap">运动算例 1</button>
      <div className="ml-[13px] flex-1 border-t border-l border-[#808080] bg-[#f7f7f7]" />
    </div>
  );
};

export default function App() {
  return (
    <div className="flex h-screen flex-col overflow-hidden bg-[#f7f7f7] font-[Inter,'Noto_Sans_CJK_SC',sans-serif] text-[15px] text-black">
      <div className="flex min-h-0 flex-1">
        <FeaturePanel />
        <main className="relative min-w-0 flex-1">
          <Scene />
          <button aria-label="collapse panel" className="absolute top-[214px] -left-px flex h-[49px] w-3 items-center justify-center border border-l-0 border-[#8a8a8a] bg-[#f7f7f7]">
            <span className="mr-1 h-[6px] w-[6px] rounded-full border border-[#8c8c8c] bg-[#bbb]" />
          </button>
        </main>
      </div>

      <section className="relative shrink-0 border-t border-[#e4e4f2]">
        <div className="border-l-2 border-[#a3b9bf]">
          <MotionToolbar />
          <div className="flex">
            <MotionTree />
            <div className="w-1 shrink-0 border-x border-[#4a4a5e] bg-white" />
            <Timeline />
          </div>
          <div className="h-px" />
          <StudyTabs />
        </div>

        {/* red mark-up */}
        <div className="pointer-events-none absolute top-[146px] left-[46px] h-[117px] w-[282px] rounded-[4px] border-4 border-[#ff2015]">
          <svg width="190" height="10" viewBox="0 0 190 10" className="absolute top-[88px] left-[49px]" fill="none">
            <path d="M0 4h43l17 4h27l14-4h33l14 4h31" stroke="#ff1408" strokeWidth="4" />
          </svg>
        </div>
      </section>
    </div>
  );
}
